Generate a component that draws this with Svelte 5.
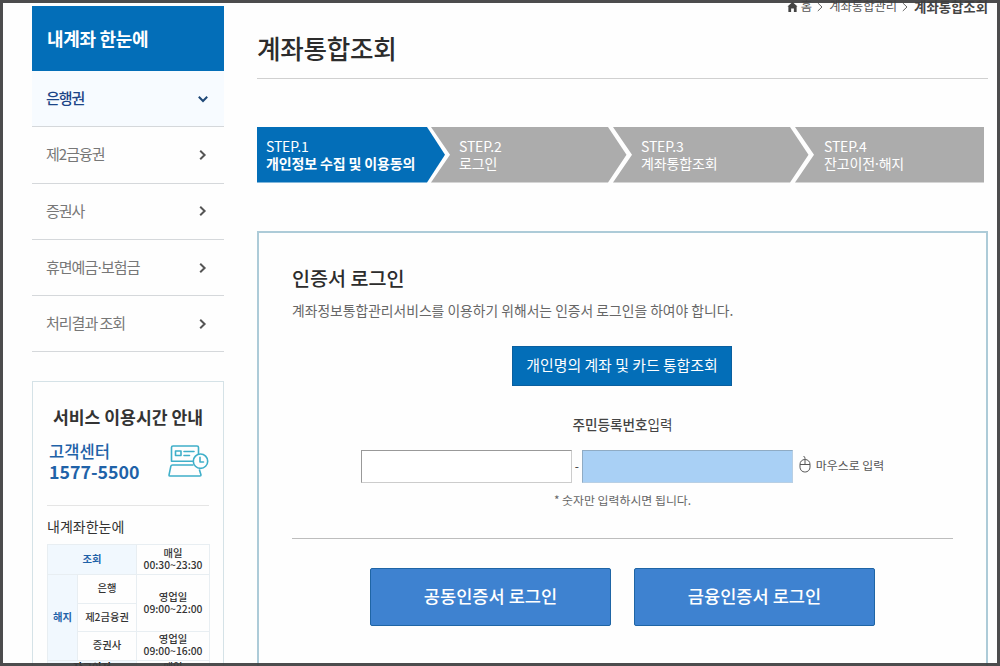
<script lang="ts">
    const menu: string[] = ["제2금융권", "증권사", "휴면예금·보험금", "처리결과 조회"];

    const steps: string[] = [
        "개인정보 수집 및 이용동의",
        "로그인",
        "계좌통합조회",
        "잔고이전·해지",
    ];

    const logins: string[] = ["공동인증서 로그인", "금융인증서 로그인"];
</script>

<div class="page">
    <aside class="sidebar">
        <h2 class="side-title">내계좌 한눈에</h2>
        <ul class="menu">
            <li class="menu-item active">
                <span>은행권</span>
                <svg viewBox="0 0 12 12" width="12" height="12">
                    <path d="M1.8 3.8 L6 8 L10.2 3.8" />
                </svg>
            </li>
            {#each menu as item}
                <li class="menu-item">
                    <span
                        >{#each item.split("·") as part, i}{#if i > 0}<i
                                    class="dot">·</i
                                >{/if}{part}{/each}</span
                    >
                    <svg viewBox="0 0 12 12" width="12" height="12">
                        <path d="M3.2 1.8 L7.6 6 L3.2 10.2" />
                    </svg>
                </li>
            {/each}
        </ul>

        <section class="info">
            <h3>서비스 이용시간 안내</h3>
            <div class="center">
                <div class="phone">
                    <span class="phone-label">고객센터</span>
                    <strong>1577-5500</strong>
                </div>
                <svg class="desk" viewBox="0 0 42 34" width="42" height="34">
                    <g fill="none" stroke="#3fafc9" stroke-width="1.6" stroke-linejoin="round" stroke-linecap="round">
                        <path d="M30.5 9.5 V3.5 Q30.5 2 29 2 H5 Q3.5 2 3.5 3.5 V17.2 H24.5" />
                        <rect x="7.5" y="7" width="5.5" height="4.5" />
                        <path d="M16 7.5 H26 M16 11.5 H21.5" />
                        <path d="M25 21 H4.5 Q3.2 21 2.8 22.3 L1 31.2 Q1 32 2 32 H32 Q33 32 33 31 L31.5 26" />
                        <circle cx="32.5" cy="17.2" r="7.2" />
                        <path d="M32 13.3 V18 H35.5" />
                    </g>
                </svg>
            </div>
            <h4>내계좌한눈에</h4>
            <table>
                <colgroup>
                    <col class="c1" /><col class="c2" /><col class="c3" />
                </colgroup>
                <tbody>
                    <tr class="first">
                        <th colspan="2">조회</th>
                        <td>매일<br />00:30~23:30</td>
                    </tr>
                    <tr>
                        <th rowspan="3">해지</th>
                        <td>은행</td>
                        <td rowspan="2">영업일<br />09:00~22:00</td>
                    </tr>
                    <tr>
                        <td>제2금융권</td>
                    </tr>
                    <tr>
                        <td>증권사</td>
                        <td>영업일<br />09:00~16:00</td>
                    </tr>
                    <tr class="last">
                        <th colspan="2">잔고이전</th>
                        <td>매일</td>
                    </tr>
                </tbody>
            </table>
        </section>
    </aside>

    <main>
        <nav class="crumbs">
            <svg viewBox="0 0 12 12" width="11" height="12">
                <path d="M6 0.5 L11.5 5.5 H10.5 V11.5 H7.5 V7.5 H4.5 V11.5 H1.5 V5.5 H0.5 Z" fill="#444" />
            </svg>
            <span>홈</span>
            <svg class="sep" viewBox="0 0 6 10" width="6" height="10"><path d="M0.8 1 L5 5 L0.8 9" /></svg>
            <span>계좌통합관리</span>
            <svg class="sep" viewBox="0 0 6 10" width="6" height="10"><path d="M0.8 1 L5 5 L0.8 9" /></svg>
            <strong>계좌통합조회</strong>
        </nav>
        <h1>계좌통합조회</h1>

        <ol class="steps">
            {#each steps as step, i}
                <li class="step" class:current={i === 0} class:end={i === 3}>
                    <span>STEP.{i + 1}</span>
                    <span class="step-name"
                        >{#each step.split("·") as part, j}{#if j > 0}<i
                                    class="dot">·</i
                                >{/if}{part}{/each}</span
                    >
                </li>
            {/each}
        </ol>

        <section class="card">
            <h2>인증서 로그인</h2>
            <p class="desc">계좌정보통합관리서비스를 이용하기 위해서는 인증서 로그인을 하여야 합니다.</p>
            <button class="lookup">개인명의 계좌 및 카드 통합조회</button>
            <p class="label"><b>주민등록번호</b>입력</p>
            <div class="fields">
                <input type="text" aria-label="앞자리" />
                <span class="dash">-</span>
                <input class="secure" type="password" aria-label="뒷자리" />
                <svg viewBox="0 0 12 18" width="12" height="18">
                    <g fill="none" stroke="#555" stroke-width="1">
                        <rect x="1" y="4.5" width="10" height="12.5" rx="4.8" />
                        <path d="M1 9.5 H11 M6 9.5 V3.5 Q6 2 4.5 1" />
                    </g>
                </svg>
                <span class="mouse">마우스로 입력</span>
            </div>
            <p class="note">* 숫자만 입력하시면 됩니다.</p>
            <div class="logins">
                {#each logins as login}
                    <button>{login}</button>
                {/each}
            </div>
        </section>
    </main>
    <div class="frame"></div>
</div>

<style>
    :global(body) {
        background: #fefefe;
    }

    .page {
        position: relative;
        box-sizing: border-box;
        width: 1000px;
        height: 666px;
        padding-left: 32px;
        display: grid;
        grid-template-columns: 192px 731px;
        gap: 33px;
        overflow: hidden;
        font-family: "Noto Sans CJK KR", sans-serif;
        color: #333;
    }

    .page * {
        box-sizing: border-box;
    }

    h1, h2, h3, h4, p, ul, ol {
        margin: 0;
        padding: 0;
        list-style: none;
    }

    button, input {
        font-family: inherit;
        padding: 0;
    }

    /* dark edge drawn over the clipped page */
    .frame {
        position: absolute;
        inset: 0;
        border: 3px solid rgba(62, 62, 64, 0.93);
        pointer-events: none;
    }

    .dot {
        margin: 0 -1.8px;
        font-style: normal;
    }

    .sidebar {
        padding-top: 6px;
    }

    .side-title {
        height: 65px;
        padding-left: 15px;
        background: #036eb8;
        color: #fff;
        font-size: 18px;
        font-weight: 700;
        line-height: 64px;
        letter-spacing: -0.3px;
    }

    .menu-item {
        display: flex;
        align-items: center;
        justify-content: space-between;
        height: 56.3px;
        padding: 0 15px 0 14px;
        border-bottom: 1px solid #d5d8db;
        color: #777;
        font-size: 15px;
        letter-spacing: -1px;
    }

    .menu-item span {
        padding-bottom: 2px;
    }

    .menu-item path {
        fill: none;
        stroke: #555;
        stroke-width: 2;
    }

    .menu-item.active {
        background: #f7fbff;
        color: #1c4587;
        font-weight: 500;
    }

    .menu-item.active path {
        stroke: #1f4877;
    }

    .info {
        height: 320px;
        margin-top: 29px;
        padding: 21px 14px 0;
        border: 1px solid #d5e2e7;
    }

    .info h3 {
        font-size: 17.2px;
        font-weight: 700;
        line-height: 28px;
        text-align: center;
        white-space: nowrap;
    }

    .center {
        display: flex;
        justify-content: space-between;
        align-items: flex-start;
        height: 75px;
        padding: 10px 0 0 2px;
        border-bottom: 1px solid #e5e5e5;
    }

    .phone {
        display: flex;
        flex-direction: column;
        color: #1f62a8;
        line-height: 20px;
    }

    .phone-label {
        font-size: 16.6px;
        font-weight: 500;
    }

    .phone strong {
        font-size: 17.8px;
        font-weight: 700;
    }

    .desk {
        margin: 3px -1px 0 0;
    }

    .info h4 {
        padding: 9px 0 7px;
        font-size: 14px;
        font-weight: 400;
        line-height: 22px;
    }

    table {
        width: 162px;
        border-collapse: collapse;
        table-layout: fixed;
        font-size: 10.3px;
        font-weight: 500;
        line-height: 12px;
        text-align: center;
    }

    .c1 {
        width: 30px;
    }

    .c2 {
        width: 59px;
    }

    .c3 {
        width: 73px;
    }

    tr {
        height: 28.6px;
    }

    tr.first {
        height: 29.5px;
    }

    th, td {
        padding: 0 0 1px;
        border: 1px solid #e8eef2;
        white-space: nowrap;
    }

    th {
        background: #f1f8fe;
        color: #1f62a8;
        font-weight: 700;
    }

    .last th, .last td {
        color: #111;
        vertical-align: top;
    }

    .crumbs {
        display: flex;
        align-items: center;
        justify-content: flex-end;
        height: 13px;
        font-size: 12.3px;
        line-height: 13px;
        color: #555;
    }

    .crumbs span:first-of-type {
        margin-left: 3px;
    }

    .sep {
        margin: 0 6px 0 5px;
    }

    .sep path {
        fill: none;
        stroke: #666;
    }

    .crumbs strong {
        font-size: 13.4px;
        color: #444;
    }

    h1 {
        height: 66px;
        border-bottom: 1px solid #d0d0d0;
        font-size: 25.6px;
        font-weight: 500;
        line-height: 70px;
        letter-spacing: -0.3px;
        color: #2c2c2c;
    }

    .steps {
        display: flex;
        margin-top: 48px;
    }

    .step {
        flex: none;
        display: flex;
        flex-direction: column;
        width: 196px;
        height: 55.5px;
        margin-left: -14px;
        padding: 10.5px 0 0 28px;
        background: #acacac;
        color: #fff;
        font-size: 14px;
        line-height: 17px;
        letter-spacing: -0.15px;
        clip-path: polygon(0 0, 177px 0, 195.5px 50%, 177px 100%, 0 100%, 19px 50%);
    }

    .step.current {
        width: 188px;
        margin-left: 0;
        padding-left: 9px;
        background: #036eb8;
        clip-path: polygon(0 0, 170px 0, 100% 50%, 170px 100%, 0 100%);
    }

    .step.current .step-name {
        font-weight: 700;
    }

    .step.end {
        width: 189px;
        padding-left: 29px;
        clip-path: polygon(0 0, 100% 0, 100% 100%, 0 100%, 19px 50%);
    }

    .step .dot {
        margin: 0 -2px;
    }

    .card {
        display: flex;
        flex-direction: column;
        align-items: center;
        height: 460px;
        margin-top: 48.5px;
        padding: 30px 33px 0;
        border: 2px solid #adcbd8;
    }

    .card h2 {
        align-self: flex-start;
        font-size: 19.6px;
        font-weight: 500;
        line-height: 29px;
        color: #2c2c2c;
    }

    .desc {
        align-self: flex-start;
        margin-top: 8px;
        font-size: 13.8px;
        line-height: 20px;
        color: #666;
        white-space: nowrap;
    }

    .lookup {
        width: 220px;
        height: 40px;
        margin: 26px 1px 0 0;
        padding-bottom: 4px;
        border: 1px solid #0a5f9f;
        background: #036eb8;
        color: #fff;
        font-size: 14.9px;
    }

    .label {
        margin-top: 28px;
        font-size: 13.6px;
        line-height: 20px;
        color: #444;
    }

    .label b {
        font-weight: 500;
    }

    .fields {
        display: flex;
        align-items: center;
        height: 33px;
        margin-top: 16px;
    }

    .fields input {
        width: 211px;
        height: 33px;
        border: 1px solid #ccc;
        border-top-color: #999;
        border-left-color: #999;
        background: #fff;
    }

    .fields .secure {
        background: #a9d0f5;
        border-color: #8fabc4 #b8cfe4 #b8cfe4 #8fabc4;
    }

    .dash {
        width: 10px;
        padding-bottom: 3px;
        font-size: 12px;
        text-align: center;
    }

    .fields svg {
        margin: 0 5px 5px 6px;
    }

    .mouse {
        padding-bottom: 4px;
        font-size: 11.9px;
        color: #555;
    }

    .note {
        margin-top: 7px;
        font-size: 11.9px;
        line-height: 20px;
        color: #666;
    }

    .logins {
        display: flex;
        justify-content: center;
        gap: 23px;
        width: 661px;
        margin-top: 28px;
        padding-top: 29px;
        border-top: 1px solid #bdbdbd;
    }

    .logins button {
        width: 241px;
        height: 58px;
        padding-bottom: 3px;
        border: 1px solid #1f65a5;
        border-radius: 2px;
        background: #3e82d0;
        color: #fff;
        font-size: 17.6px;
        font-weight: 500;
    }
</style>
